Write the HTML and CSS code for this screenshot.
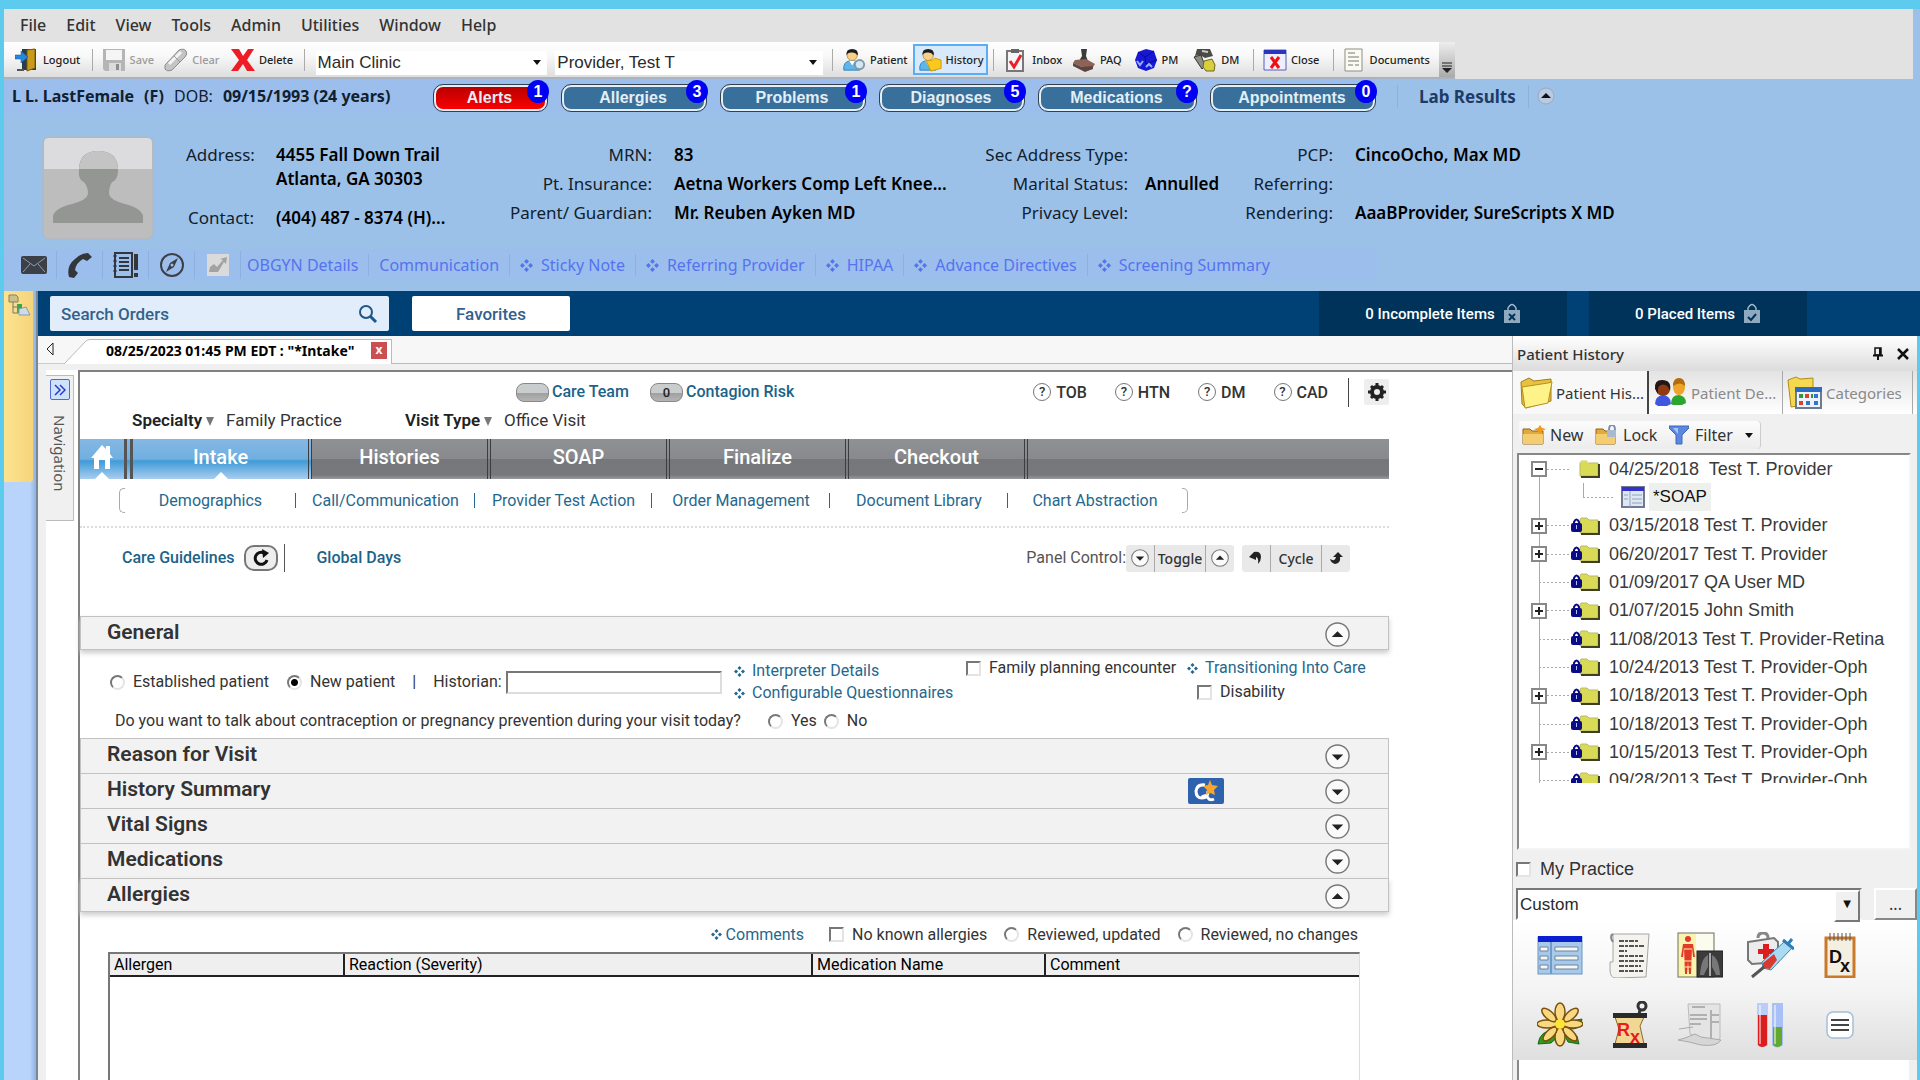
FILE: index.html
```html
<!DOCTYPE html>
<html lang="en">
<head>
    <meta charset="UTF-8">
    <title>Main Clinic - Intake</title>
    <link rel="stylesheet" href="styles.css">
</head>
<body>

<!-- shared icons -->
<svg class="sprite">
    <symbol id="i-folder" viewBox="0 0 24 20">
        <path d="M3 4 L4 2 H10 L12 4 H21 V17 H3Z" fill="#d9da55" stroke="#b9b96a"/>
        <path d="M3 4 L4 2 H10 L12 4" fill="none" stroke="#e9e9b0"/>
        <path d="M22 5 V18 H4" fill="none" stroke="#3f3f22" stroke-width="2"/>
    </symbol>
    <symbol id="i-locked" viewBox="0 0 30 20">
        <path d="M9 4 L10 2 H16 L18 4 H27 V17 H9Z" fill="#d9da55" stroke="#b9b96a"/>
        <path d="M28 5 V18 H10" fill="none" stroke="#3f3f22" stroke-width="2"/>
        <path d="M3 8 V6 Q5.500 1 8 6 V8" fill="none" stroke="#0b0b86" stroke-width="2"/>
        <rect x="0" y="7" width="11" height="9" rx="2" fill="#0b0b86"/>
        <path d="M5.500 9 V13" stroke="#b8c0ff" stroke-width="1"/>
    </symbol>
    <symbol id="i-up" viewBox="0 0 26 26">
        <circle cx="13" cy="13" r="12" fill="#fafafa" stroke="#777" stroke-width="1.500"/>
        <path d="M7 15.500 L13 9.500 L19 15.500Z" fill="#222"/>
    </symbol>
    <symbol id="i-down" viewBox="0 0 26 26">
        <circle cx="13" cy="13" r="12" fill="#fafafa" stroke="#777" stroke-width="1.500"/>
        <path d="M7 11 L13 17 L19 11Z" fill="#222"/>
    </symbol>
    <symbol id="i-diamond" viewBox="0 0 14 14">
        <path d="M7 0 L9.600 2.600 L7 5.200 L4.400 2.600Z M7 8.800 L9.600 11.400 L7 14 L4.400 11.400Z M2.600 4.400 L5.200 7 L2.600 9.600 L0 7Z M11.400 4.400 L14 7 L11.400 9.600 L8.800 7Z" fill="currentColor"/>
    </symbol>
    <symbol id="i-person" viewBox="0 0 26 26">
        <path d="M2 24 Q1 15 8 14 L14 14 Q19 15 19 24Z" fill="#5fb4ea" stroke="#2d83bd"/>
        <path d="M8 14 L11 19 L14 14Z" fill="#fff"/>
        <circle cx="11" cy="8" r="5.500" fill="#f7cf8b" stroke="#c1903f"/>
        <path d="M5 8 Q4 1 11 1 Q18 1 17 8 Q14 4 10 5 Q6 5 5 8Z" fill="#1c1c1c"/>
    </symbol>
    <symbol id="i-bag" viewBox="0 0 18 22">
        <path d="M5 8 V5 Q9 -2 13 5 V8" fill="none" stroke="#9fb6c8" stroke-width="1.500"/>
        <path d="M1 7 H17 V20 H1Z" fill="#8fa9be"/>
    </symbol>
</svg>

<header class="top">
    <nav class="menubar">
        <a href="#">File</a><a href="#">Edit</a><a href="#">View</a><a href="#">Tools</a><a href="#">Admin</a><a href="#">Utilities</a><a href="#">Window</a><a href="#">Help</a>
    </nav>

    <div class="toolbar-row">
        <div class="toolbar">
            <button class="tool logout">
                <svg width="24" height="24" viewBox="0 0 24 24"><path d="M7 1 H21 V22 H7Z" fill="#2b3c4c"/><path d="M12 2 L20 1 V20 L12 23Z" fill="#c99a1c" stroke="#7a5a08"/><path d="M0 7 H6 V3 L13 9 L6 15 V11 H0Z" fill="#2389e0" stroke="#0c549c" stroke-width="0.500"/><path d="M2 22 H9" stroke="#555" stroke-width="2"/></svg>
                Logout
            </button>
            <span class="sep"></span>
            <button class="tool off save">
                <svg width="24" height="24" viewBox="0 0 24 24"><path d="M1 1 H23 V23 H3 L1 21Z" fill="#b5b5b5"/><path d="M4 2 H20 V12 H4Z" fill="#f5f5f5"/><path d="M7 15 H19 V23 H7Z" fill="#dcdcdc"/><path d="M14 16 H17 V22 H14Z" fill="#8d8d8d"/></svg>
                Save
            </button>
            <button class="tool off clear">
                <svg width="24" height="24" viewBox="0 0 24 24"><path d="M1 17 L15 2 Q20 0 22 3 Q24 6 21 9 L8 22 Q3 24 1 21Z" fill="#c4c4c4" stroke="#8c8c8c"/><path d="M5 16 L17 4" stroke="#f4f4f4" stroke-width="3"/><path d="M10 8 L16 14" stroke="#999"/></svg>
                Clear
            </button>
            <button class="tool delete">
                <svg width="24" height="24" viewBox="0 0 24 24"><path d="M0 1 H8 L12 8 L17 1 H23 L16 12 L24 23 H16 L12 16 L7 23 H0 L8 12Z" fill="#ee1c25"/></svg>
                Delete
            </button>
            <span class="sep"></span>
            <span class="combo clinic"><select aria-label="Clinic"><option>Main Clinic</option></select></span>
            <span class="combo provider"><select aria-label="Provider"><option>Provider, Test T</option></select></span>
            <span class="sep"></span>
            <button class="tool find">
                <svg width="24" height="24" viewBox="0 0 26 26"><use href="#i-person"/><circle cx="19" cy="18" r="5" fill="#cfe8f5" stroke="#8298a5" stroke-width="2"/></svg>
                Patient
            </button>
            <button class="tool history">
                <svg width="24" height="24" viewBox="0 0 26 26"><use href="#i-person"/><path d="M9 14 L16 13 L18 11 L25 13 V22 L14 25Z" fill="#fbc91c" stroke="#cf9606"/></svg>
                History
            </button>
            <span class="sep"></span>
            <button class="tool inbox">
                <svg width="18" height="24" viewBox="0 0 18 24"><path d="M1 3 H17 V23 H1Z" fill="#f5f5f5" stroke="#777" stroke-width="2"/><path d="M5 1 H13 V5 H5Z" fill="#666"/><path d="M4 13 L8 19 L15 7" fill="none" stroke="#e8202a" stroke-width="3"/></svg>
                Inbox
            </button>
            <button class="tool paq">
                <svg width="24" height="24" viewBox="0 0 24 24"><path d="M9 1 H15 L14 8 L16 13 H7 L10 8Z" fill="#3d3a3a"/><path d="M3 12 L14 11 L23 16 L21 19 L10 19 L1 15Z" fill="#8d6257"/><path d="M1 15 L10 19 L21 18 V21 L13 24 L1 18Z" fill="#5e443f"/></svg>
                PAQ
            </button>
            <button class="tool pm">
                <svg width="24" height="24" viewBox="0 0 24 24"><path d="M12 1 L20 3 L23 12 L20 20 L12 23 L4 20 L1 12 L4 4Z" fill="#1717d6"/><path d="M4 4 L11 9 L20 3 M11 9 L12 16 L23 12" fill="none" stroke="#0a0a8c"/><path d="M3 13 L6 17 L9 13 M12 19 L15 16 L18 19" fill="none" stroke="#8fb0ff" stroke-width="2"/></svg>
                PM
            </button>
            <button class="tool dm">
                <svg width="24" height="24" viewBox="0 0 24 24"><path d="M4 1 H17 L20 8 L12 10 L7 7 L2 8Z" fill="#4a4a46"/><path d="M1 9 L8 7 L12 18 L9 21Z" fill="#8d8d86" stroke="#333"/><path d="M11 13 L19 11 L22 17 L21 23 H13 L10 19Z" fill="#d9cf3c" stroke="#6b6620"/><path d="M9 3 L15 4" stroke="#ccc" stroke-width="2"/></svg>
                DM
            </button>
            <span class="sep"></span>
            <button class="tool close">
                <svg width="24" height="24" viewBox="0 0 24 24"><path d="M1 2 H23 V22 H1Z" fill="#eef" stroke="#5060b8"/><path d="M1 2 H23 V6 H1Z" fill="#2a35bd"/><path d="M8 9 L16 20 M16 9 L8 20" stroke="#ee1111" stroke-width="3"/></svg>
                Close
            </button>
            <span class="sep"></span>
            <button class="tool documents">
                <svg width="20" height="24" viewBox="0 0 20 24"><path d="M1 1 H18 V23 H1Z" fill="#fbfbf2" stroke="#8d8d86"/><path d="M4 5 H11 M4 9 H15 M4 13 H15 M4 17 H9 M11 17 H15" stroke="#777"/></svg>
                Documents
            </button>
            <button class="overflow" aria-label="More tools"><svg width="10" height="12" viewBox="0 0 10 12"><path d="M0 1 H10 M0 4 H10" stroke="#222"/><path d="M0 6 H10 L5 11Z" fill="#222"/></svg></button>
        </div>
    </div>

    <div class="patient-bar">
        <p class="who"><b>L L. LastFemale</b><b>(F)</b><span>DOB:</span><b>09/15/1993 (24 years)</b></p>
        <div class="pills">
            <button class="pill alert">Alerts<span class="badge">1</span></button>
            <button class="pill">Allergies<span class="badge">3</span></button>
            <button class="pill">Problems<span class="badge">1</span></button>
            <button class="pill">Diagnoses<span class="badge">5</span></button>
            <button class="pill">Medications<span class="badge">?</span></button>
            <button class="pill">Appointments<span class="badge">0</span></button>
        </div>
        <div class="lab">
            <a href="#">Lab Results</a>
            <button aria-label="Collapse"><svg width="18" height="18" viewBox="0 0 18 18"><circle cx="9" cy="9" r="8" fill="#b8cbe2" stroke="#9aa9bb"/><path d="M4 11 L9 6 L14 11Z" fill="#111"/></svg></button>
        </div>
    </div>

    <div class="patient">
        <svg class="avatar" width="112" height="104" viewBox="0 0 112 104">
            <rect x="1" y="1" width="110" height="102" rx="6" fill="#bdbdbd" stroke="#b0b7bf"/>
            <path d="M2 33 V7 Q2 2 7 2 H105 Q110 2 110 7 V33Z" fill="#dcdcde"/>
            <path d="M11 87 V80 Q13 72 30 68 Q45 64 46 58 Q46 51 42 46 Q36 44 37 34 Q37 15 56 15 Q76 15 76 34 Q76 44 70 46 Q67 51 67 58 Q68 64 83 68 Q99 72 101 80 V87Z" fill="#949694"/>
            <path d="M37 33 Q38 15 56 15 Q75 15 76 33Z" fill="#c3c4c3"/>
        </svg>
        <dl class="facts address">
            <dt>Address:</dt><dd>4455 Fall Down Trail<br>Atlanta, GA 30303</dd>
            <dt>Contact:</dt><dd>(404) 487 - 8374 (H)...</dd>
        </dl>
        <dl class="facts insurance">
            <dt>MRN:</dt><dd>83</dd>
            <dt>Pt. Insurance:</dt><dd>Aetna Workers Comp Left Knee...</dd>
            <dt>Parent/ Guardian:</dt><dd>Mr. Reuben Ayken MD</dd>
        </dl>
        <dl class="facts status">
            <dt>Sec Address Type:</dt><dd></dd>
            <dt>Marital Status:</dt><dd>Annulled</dd>
            <dt>Privacy Level:</dt><dd></dd>
        </dl>
        <dl class="facts doctors">
            <dt>PCP:</dt><dd>CincoOcho, Max MD</dd>
            <dt>Referring:</dt><dd></dd>
            <dt>Rendering:</dt><dd>AaaBProvider, SureScripts X MD</dd>
        </dl>
    </div>

    <div class="quick">
        <button aria-label="Mail"><svg width="26" height="18" viewBox="0 0 26 18"><rect width="26" height="18" rx="2" fill="#3c3f45"/><path d="M2 2 L13 10 L24 2 M2 16 L9 8 M24 16 L17 8" fill="none" stroke="#8d9db3"/></svg></button>
        <button aria-label="Phone"><svg width="26" height="26" viewBox="0 0 26 26"><path d="M2 25 Q-1 14 8 7 Q14 1 21 1 L25 5 L20 9 L16 7 Q9 11 8 18 L11 21 L7 26Z" fill="#33363b"/></svg></button>
        <button aria-label="Notes"><svg width="28" height="26" viewBox="0 0 28 26"><rect x="3" y="1" width="17" height="24" fill="none" stroke="#33363b" stroke-width="2"/><path d="M7 6 H17 M7 10 H17 M7 14 H17 M7 18 H17" stroke="#33363b" stroke-width="2"/><path d="M1 4 H5 M1 9 H5 M1 14 H5 M1 19 H5" stroke="#33363b"/><path d="M24 2 V18 M24 21 V25" stroke="#33363b" stroke-width="4"/></svg></button>
        <button aria-label="Compass"><svg width="26" height="26" viewBox="0 0 26 26"><circle cx="13" cy="13" r="11" fill="none" stroke="#3c3f45" stroke-width="2"/><path d="M19 6 L15 15 L7 20 L11 11Z" fill="#3c3f45"/><circle cx="13" cy="13" r="1.500" fill="#9cbeec"/></svg></button>
        <button aria-label="Chart"><svg width="22" height="22" viewBox="0 0 22 22"><rect width="22" height="22" fill="#dadada"/><path d="M2 18 L3 13 L7 10 L10 13 L16 6 L13 5 L20 3 L19 10 L17 8 L11 18Z" fill="#a2a2a2"/></svg></button>
        <a href="#">OBGYN Details</a>
        <a href="#">Communication</a>
        <a href="#"><svg><use href="#i-diamond"/></svg>Sticky Note</a>
        <a href="#"><svg><use href="#i-diamond"/></svg>Referring Provider</a>
        <a href="#"><svg><use href="#i-diamond"/></svg>HIPAA</a>
        <a href="#"><svg><use href="#i-diamond"/></svg>Advance Directives</a>
        <a href="#"><svg><use href="#i-diamond"/></svg>Screening Summary</a>
    </div>
</header>

<div class="below">
    <aside class="rail">
        <button class="rail-tab" aria-label="Folders"><svg width="24" height="24" viewBox="0 0 24 24"><path d="M2 1 H9 L11 3 V8 H2Z" fill="#c9c28f" stroke="#87815a"/><path d="M6 8 V19 H11 M6 13 H11" fill="none" stroke="#777"/><path d="M10 10 H15 V19 H10Z" fill="#36a852"/><path d="M12 15 L19 13 L23 21 H12Z" fill="#cfdbe6" stroke="#8a9bab"/></svg></button>
    </aside>

    <div class="work">
        <div class="orders">
            <label class="search">
                <input type="text" placeholder="Search Orders" aria-label="Search Orders">
                <svg width="20" height="20" viewBox="0 0 20 20"><circle cx="8" cy="8" r="6" fill="none" stroke="#1d568c" stroke-width="2"/><path d="M12 12 L18 18" stroke="#1d568c" stroke-width="3"/></svg>
            </label>
            <button class="favorites">Favorites</button>
            <button class="items incomplete">0 Incomplete Items<svg width="18" height="22" viewBox="0 0 18 22"><use href="#i-bag"/><path d="M6 11 L12 17 M12 11 L6 17" stroke="#00335a" stroke-width="2"/></svg></button>
            <button class="items">0 Placed Items<svg width="18" height="22" viewBox="0 0 18 22"><use href="#i-bag"/><path d="M5 14 L8 17 L13 11" fill="none" stroke="#00335a" stroke-width="2"/></svg></button>
        </div>

        <div class="columns">
            <main>
                <div class="doc-tabs">
                    <button class="scroll" aria-label="Scroll tabs"><svg width="8" height="14" viewBox="0 0 8 14"><path d="M7 1 L1 7 L7 13Z" fill="none" stroke="#222"/></svg></button>
                    <svg class="slant" width="26" height="25" viewBox="0 0 26 25"><path d="M0 25 L21 3 Q23 1 26 1 V25Z" fill="#fff"/><path d="M0 25 L21 3 Q23 0.500 26 0.500" fill="none" stroke="#bbb"/></svg>
                    <div class="doc-tab">08/25/2023 01:45 PM EDT : "*Intake"<button aria-label="Close tab">x</button></div>
                    <div class="doc-rest"></div>
                </div>

                <div class="doc">
                    <div class="nav-side">
                        <div class="nav-box">
                            <button aria-label="Expand navigation"><svg width="12" height="12" viewBox="0 0 12 12"><path d="M1 1 L6 6 L1 11 M6 1 L11 6 L6 11" fill="none" stroke="#2b3bd0" stroke-width="1.500"/></svg></button>
                            <span>Navigation</span>
                        </div>
                    </div>

                    <div class="page">
                        <div class="page-head">
                            <a class="care" href="#"><i class="lozenge"></i>Care Team</a>
                            <a class="risk" href="#"><i class="lozenge">0</i>Contagion Risk</a>
                            <div class="helps">
                                <a href="#"><i>?</i>TOB</a>
                                <a href="#"><i>?</i>HTN</a>
                                <a href="#"><i>?</i>DM</a>
                                <a href="#"><i>?</i>CAD</a>
                            </div>
                            <button class="gear" aria-label="Settings"><svg width="18" height="18" viewBox="0 0 18 18"><circle cx="9" cy="9" r="5" fill="none" stroke="#222" stroke-width="4"/><path d="M9 0 V4 M9 14 V18 M0 9 H4 M14 9 H18 M3 3 L5 5 M13 13 L15 15 M3 15 L5 13 M13 5 L15 3" stroke="#222" stroke-width="3"/></svg></button>
                        </div>
                        <div class="visit">
                            <p class="specialty"><b>Specialty</b><i></i>Family Practice</p>
                            <p><b>Visit Type</b><i></i>Office Visit</p>
                        </div>

                        <nav class="steps">
                            <a class="home on" href="#" aria-label="Home"><svg width="22" height="24" viewBox="0 0 22 24"><path d="M11 0 L15 4 V1 H19 V9 L22 13 H19 V24 H14 V15 H8 V24 H3 V13 H0Z" fill="#fff"/></svg></a>
                            <a class="on" href="#">Intake</a>
                            <a href="#">Histories</a>
                            <a href="#">SOAP</a>
                            <a href="#">Finalize</a>
                            <a href="#">Checkout</a>
                        </nav>

                        <nav class="subnav">
                            <a href="#">Demographics</a>
                            <a href="#">Call/Communication</a>
                            <a href="#">Provider Test Action</a>
                            <a href="#">Order Management</a>
                            <a href="#">Document Library</a>
                            <a href="#">Chart Abstraction</a>
                        </nav>

                        <div class="guide">
                            <a href="#">Care Guidelines</a>
                            <button class="refresh" aria-label="Refresh"><svg width="18" height="18" viewBox="0 0 18 18"><path d="M12 4 A6 6 0 1 0 15 11" fill="none" stroke="#111" stroke-width="3"/><path d="M10 0 L17 4 L11 9Z" fill="#111"/></svg></button>
                            <a class="global" href="#">Global Days</a>
                            <span class="panel-label">Panel Control:</span>
                            <div class="group toggle">
                                <button aria-label="Open all"><svg width="18" height="18"><use href="#i-down"/></svg></button>
                                <button class="word">Toggle</button>
                                <button aria-label="Close all"><svg width="18" height="18"><use href="#i-up"/></svg></button>
                            </div>
                            <div class="group">
                                <button aria-label="Previous"><svg width="14" height="14" viewBox="0 0 14 14"><path d="M0 6 L5 1 Q12 0 12 6 Q12 10 9 13 Q10 7 7 6 V9Z" fill="#222"/></svg></button>
                                <button class="word">Cycle</button>
                                <button aria-label="Next"><svg width="14" height="14" viewBox="0 0 14 14"><path d="M9 1 L14 6 H11 Q12 12 6 13 Q2 12 1 8 Q6 11 7 6 H4Z" fill="#222"/></svg></button>
                            </div>
                        </div>

                        <section class="open">
                            <h2>General<button aria-label="Collapse General"><svg><use href="#i-up"/></svg></button></h2>
                            <div class="general">
                                <div class="kind">
                                    <label><input type="radio" name="kind">Established patient</label>
                                    <label><input type="radio" name="kind" checked>New patient</label>
                                    <span>|</span>
                                    <label class="historian">Historian:<input type="text"></label>
                                </div>
                                <div class="links">
                                    <a href="#"><svg><use href="#i-diamond"/></svg>Interpreter Details</a>
                                    <a href="#"><svg><use href="#i-diamond"/></svg>Configurable Questionnaires</a>
                                </div>
                                <label class="family"><input type="checkbox">Family planning encounter</label>
                                <div class="care-links">
                                    <a href="#"><svg><use href="#i-diamond"/></svg>Transitioning Into Care</a>
                                    <label><input type="checkbox">Disability</label>
                                </div>
                            </div>
                            <div class="question">
                                <p>Do you want to talk about contraception or pregnancy prevention during your visit today?</p>
                                <label><input type="radio" name="talk">Yes</label>
                                <label><input type="radio" name="talk">No</label>
                            </div>
                        </section>
                        <section><h2>Reason for Visit<button aria-label="Expand Reason for Visit"><svg><use href="#i-down"/></svg></button></h2></section>
                        <section><h2>History Summary
                            <svg class="q-badge" width="36" height="26" viewBox="0 0 36 26"><rect width="36" height="26" rx="2" fill="#2f62ac"/><path d="M17 7 Q9 6 8 13 Q8 20 14 20 Q20 20 20 13 M14 19 Q18 16 20 20 Q22 23 26 21" fill="none" stroke="#fff" stroke-width="3"/><path d="M22 2 L24 7 L30 8 L26 12 L27 17 L22 15 L18 17 L19 12 L15 8 L20 7Z" fill="#f6a530"/></svg>
                            <button aria-label="Expand History Summary"><svg><use href="#i-down"/></svg></button></h2></section>
                        <section><h2>Vital Signs<button aria-label="Expand Vital Signs"><svg><use href="#i-down"/></svg></button></h2></section>
                        <section><h2>Medications<button aria-label="Expand Medications"><svg><use href="#i-down"/></svg></button></h2></section>
                        <section class="open">
                            <h2>Allergies<button aria-label="Collapse Allergies"><svg><use href="#i-up"/></svg></button></h2>
                            <div class="review">
                                <a href="#"><svg><use href="#i-diamond"/></svg>Comments</a>
                                <label><input type="checkbox">No known allergies</label>
                                <label><input type="radio" name="review">Reviewed, updated</label>
                                <label><input type="radio" name="review">Reviewed, no changes</label>
                            </div>
                        </section>
                        <div class="grid-box">
                            <table>
                                <thead><tr><th class="c-allergen">Allergen</th><th class="c-reaction">Reaction (Severity)</th><th class="c-med">Medication Name</th><th>Comment</th></tr></thead>
                            </table>
                        </div>
                    </div>
                </div>
            </main>

            <aside class="history-panel">
                <div class="hp-title">Patient History
                    <button aria-label="Pin"><svg width="12" height="14" viewBox="0 0 12 14"><path d="M3 1 H9 V8 H3Z" fill="none" stroke="#111" stroke-width="1.500"/><path d="M8 1 V8" stroke="#111" stroke-width="2"/><path d="M1 8.500 H11 M6 9 V13" stroke="#111" stroke-width="2"/></svg></button>
                    <button aria-label="Close panel"><svg width="14" height="12" viewBox="0 0 14 12"><path d="M2 1 L12 11 M12 1 L2 11" stroke="#111" stroke-width="2.500"/></svg></button>
                </div>
                <div class="hp-tabs">
                    <button class="on"><svg width="34" height="32" viewBox="0 0 34 32"><path d="M1 5 L9 1 L14 4 L31 2 V24 L6 31 L2 27Z" fill="#e8c13f" stroke="#a07d18"/><path d="M2 10 L28 6 L32 5 L28 26 L5 31Z" fill="#fdf388" stroke="#b59120"/></svg>Patient His...</button>
                    <button><svg width="34" height="32" viewBox="0 0 34 32"><path d="M2 27 Q2 19 10 18 Q18 19 18 27 L14 29 H5Z" fill="#3f57e0"/><path d="M18 27 Q18 18 26 18 Q33 19 33 26 L29 28 H20Z" fill="#2ba52f"/><circle cx="10" cy="12" r="7" fill="#8f3a13"/><path d="M2 12 Q1 3 9 3 Q19 3 17 14 Q14 6 8 8 Q4 9 5 17Z" fill="#221714"/><ellipse cx="26" cy="10" rx="6" ry="8" fill="#eda428"/><path d="M20 9 Q20 1 26 1 Q32 1 32 9 Q27 4 20 9Z" fill="#b06d10"/></svg>Patient De...</button>
                    <button><svg width="36" height="34" viewBox="0 0 36 34"><path d="M1 4 L9 1 L13 3 L26 2 V28 L4 31Z" fill="#f3d850" stroke="#b18c1c"/><rect x="9" y="12" width="25" height="20" fill="#eef3fb" stroke="#6d7b90" stroke-width="2"/><path d="M8 11 H35 V16 H8Z" fill="#2d6cc0"/><path d="M12 20 H16 M24 20 H26" stroke="#2c9a3c" stroke-width="4"/><path d="M18 20 H22 M12 27 H16" stroke="#d7442a" stroke-width="4"/><path d="M27 20 H31 M19 27 H23 M27 27 H31" stroke="#2f75d6" stroke-width="4"/></svg>Categories</button>
                </div>
                <div class="hp-tools">
                    <div class="hp-tools-in">
                        <button class="t-new"><svg width="24" height="20" viewBox="0 0 24 20"><path d="M1 4 H8 L10 6 H21 V19 H1Z" fill="#e0aa3c" stroke="#8f6512"/><path d="M1 9 H21 V19 H1Z" fill="#f3cd70"/><path d="M18 0 L20 3 L24 4 L20 6 L18 9 L16 6 L12 4 L16 3Z" fill="#f39a1a"/></svg>New</button>
                        <button class="t-lock"><svg width="24" height="20" viewBox="0 0 24 20"><path d="M1 4 H8 L10 6 H20 V19 H1Z" fill="#e0aa3c" stroke="#8f6512"/><path d="M1 9 H20 V19 H1Z" fill="#f3cd70"/><path d="M14 5 Q14 0 17 0 Q20 0 20 5" fill="none" stroke="#7f90ad" stroke-width="2"/><rect x="12" y="5" width="9" height="7" fill="#a8b9d4"/></svg>Lock</button>
                        <button class="t-filter"><svg width="20" height="20" viewBox="0 0 20 20"><path d="M0 1 H20 V3 L13 10 V19 H7 V10 L0 3Z" fill="#5b87e0" stroke="#3f68bb"/><path d="M4 3 H9 V9Z" fill="#a9c4f7"/></svg>Filter<i></i></button>
                    </div>
                </div>
                <div class="tree">
                    <div class="tree-clip">
                        <ul>
                            <li class="exp first"><i class="box minus"></i><svg class="fold"><use href="#i-folder"/></svg>04/25/2018&nbsp; Test T. Provider</li>
                            <li class="child"><svg width="24" height="22" viewBox="0 0 24 22"><rect x="1" y="1" width="22" height="20" fill="#dfe7f2" stroke="#707a92" stroke-width="2"/><path d="M1 1 H23 V5 H1Z" fill="#3432c8"/><path d="M9 5 V21 M3 9 H7 M3 13 H7 M11 9 H21 M11 13 H21 M11 17 H21" stroke="#8fa3c4"/></svg><span>*SOAP</span></li>
                            <li class="exp"><i class="box"></i><svg class="lock"><use href="#i-locked"/></svg>03/15/2018 Test T. Provider</li>
                            <li class="exp"><i class="box"></i><svg class="lock"><use href="#i-locked"/></svg>06/20/2017 Test T. Provider</li>
                            <li><svg class="lock"><use href="#i-locked"/></svg>01/09/2017 QA User MD</li>
                            <li class="exp"><i class="box"></i><svg class="lock"><use href="#i-locked"/></svg>01/07/2015 John Smith</li>
                            <li><svg class="lock"><use href="#i-locked"/></svg>11/08/2013 Test T. Provider-Retina</li>
                            <li><svg class="lock"><use href="#i-locked"/></svg>10/24/2013 Test T. Provider-Oph</li>
                            <li class="exp"><i class="box"></i><svg class="lock"><use href="#i-locked"/></svg>10/18/2013 Test T. Provider-Oph</li>
                            <li><svg class="lock"><use href="#i-locked"/></svg>10/18/2013 Test T. Provider-Oph</li>
                            <li class="exp"><i class="box"></i><svg class="lock"><use href="#i-locked"/></svg>10/15/2013 Test T. Provider-Oph</li>
                            <li><svg class="lock"><use href="#i-locked"/></svg>09/28/2013 Test T. Provider-Oph</li>
                        </ul>
                    </div>
                </div>
                <label class="practice"><input type="checkbox">My Practice</label>
                <div class="custom">
                    <span class="combo raised"><select aria-label="Template set"><option>Custom</option></select></span>
                    <button>...</button>
                </div>
                <div class="apps">
                    <button aria-label="Templates"><svg width="46" height="46" viewBox="0 0 46 46"><rect x="1" y="5" width="44" height="37" fill="#a9c9ea" stroke="#6d93bd"/><path d="M1 4 H45 V10 H1Z" fill="#0a1fd0"/><path d="M14 10 V42" stroke="#6f9bcb" stroke-width="2"/><path d="M18 15 H41 V19 H18Z M18 24 H41 V28 H18Z M18 33 H41 V37 H18Z M3 15 H11 V19 H3Z M3 24 H11 V28 H3Z M3 33 H11 V37 H3Z" fill="#f7f7ee" stroke="#6685a6"/></svg></button>
                    <button aria-label="Documents"><svg width="46" height="46" viewBox="0 0 46 46"><path d="M6 2 L42 2 L39 45 L9 46 Q3 46 3 38 V30 L6 30Z" fill="#f4f3ee" stroke="#a6a6a2"/><path d="M6 2 Q2 4 6 10" fill="none" stroke="#888" stroke-width="2"/><path d="M12 9 H32 M12 14 H37 M12 19 H20 M12 24 H36 M12 29 H37 M12 34 H34 M12 39 H36" stroke="#555" stroke-width="2" stroke-dasharray="5 1 3 1"/></svg></button>
                    <button aria-label="Images"><svg width="46" height="46" viewBox="0 0 46 46"><rect x="1" y="1" width="36" height="44" fill="#f8f4b0" stroke="#70705e"/><path d="M19 2 H36 V20 H19Z" fill="#fbfbee"/><circle cx="11" cy="7" r="3" fill="#e23a26"/><path d="M6 12 H16 L18 25 H16 L15 15 L14 42 H12 L11 30 L10 42 H8 L7 15 L6 25 H4Z" fill="#e23a26"/><path d="M7 17 H15 M7 29 H15 M8 35 H14" stroke="#f8f4b0"/><rect x="20" y="19" width="26" height="26" fill="#3b3b3b" stroke="#222"/><path d="M23 43 Q24 26 31 23 V35 Q28 40 27 43Z M43 43 Q42 26 35 23 V35 Q38 40 39 43Z" fill="#777"/><path d="M33 21 V44" stroke="#aaa" stroke-width="2"/></svg></button>
                    <button aria-label="Immunizations"><svg width="48" height="46" viewBox="0 0 48 46"><path d="M12 6 Q12 1 17 1 Q22 1 22 6" fill="none" stroke="#888" stroke-width="3"/><path d="M2 10 L28 6 L32 10 V30 L6 32 L2 28Z" fill="#ececec" stroke="#777" stroke-width="2"/><path d="M17 12 H23 V17 H28 V22 H23 V27 H17 V22 H12 V17 H17Z" fill="#e01d1d"/><path d="M38 10 L46 16 L25 38 L17 36 L16 30Z" fill="#a9dcf3" stroke="#3b87b5"/><path d="M17 31 L28 22 L31 28 L24 37 L17 36Z" fill="#d83931"/><path d="M18 35 L6 45" stroke="#555" stroke-width="3"/><path d="M37 8 L48 17 M42 12 L46 7" stroke="#2f7db9" stroke-width="3"/></svg></button>
                    <button aria-label="Diagnosis"><svg width="32" height="46" viewBox="0 0 32 46"><rect x="2" y="6" width="28" height="39" fill="#f4efe0" stroke="#c9792a" stroke-width="3"/><path d="M6 1 V9 M10 1 V9 M14 1 V9 M18 1 V9 M22 1 V9 M26 1 V9" stroke="#555"/><text x="5" y="31" class="dx">D</text><text x="16" y="40" class="dx">x</text></svg></button>
                    <button aria-label="Allergies"><svg width="46" height="46" viewBox="0 0 46 46"><path d="M1 42 Q3 28 18 28 L24 32 L14 41Z M30 20 L45 17 Q44 28 32 27Z M28 34 L40 34 L42 42 L31 40Z" fill="#2f9a22" stroke="#1b6612"/><g fill="#f8d982" stroke="#7b4f0a" stroke-width="1.500"><ellipse cx="23" cy="10" rx="5" ry="9"/><ellipse cx="23" cy="35" rx="5" ry="9"/><ellipse cx="10" cy="22" rx="10" ry="4"/><ellipse cx="36" cy="22" rx="10" ry="4"/><ellipse cx="12" cy="13" rx="9" ry="4" transform="rotate(42 12 13)"/><ellipse cx="34" cy="13" rx="9" ry="4" transform="rotate(-42 34 13)"/><ellipse cx="13" cy="32" rx="9" ry="4" transform="rotate(-45 13 32)"/><ellipse cx="33" cy="32" rx="9" ry="4" transform="rotate(45 33 32)"/></g><circle cx="23" cy="22" r="5" fill="#ffe432"/></svg></button>
                    <button aria-label="Prescriptions"><svg width="36" height="48" viewBox="0 0 36 48"><circle cx="30" cy="5" r="4" fill="none" stroke="#333" stroke-width="3"/><path d="M28 9 L27 13" stroke="#333" stroke-width="3"/><path d="M3 16 H32 L28 25 L32 43 H3 L7 28Z" fill="#f1d794" stroke="#8b6a2b"/><path d="M1 12 H35 V17 H1Z M1 42 H35 V47 H1Z" fill="#2a2a2a"/><text x="5" y="35" class="rx">R</text><text x="18" y="42" class="rx">x</text></svg></button>
                    <button aria-label="Orders"><svg width="46" height="46" viewBox="0 0 46 46"><path d="M11 2 H43 V36 L38 42 L13 32Z" fill="#e4e4e4" stroke="#bbb"/><path d="M15 5 H28 M13 13 H30 M13 17 H30 M13 22 H24 M34 8 V40 M35 13 H42 M35 20 H42" stroke="#b0b0b0" stroke-width="2"/><path d="M1 38 L8 36 L18 32 L24 35 L44 38 Q40 45 24 43 L12 40Z M2 27 L16 25" fill="#d6d6d6" stroke="#aaa"/></svg></button>
                    <button aria-label="Labs"><svg width="28" height="46" viewBox="0 0 28 46"><path d="M1 1 H12 V43 Q6 48 1 43Z" fill="#b9cdfa"/><path d="M2 13 H11 V43 Q6 47 2 43Z" fill="#db1d1d"/><path d="M16 1 H27 V43 Q21 48 16 43Z" fill="#a9c0f6"/><path d="M17 25 H26 V43 Q21 47 17 43Z" fill="#63a930"/><path d="M4 3 V42 M19 3 V42" stroke="#fff" stroke-opacity="0.500" stroke-width="2"/></svg></button>
                    <button aria-label="List"><svg width="28" height="28" viewBox="0 0 28 28"><rect x="1" y="1" width="26" height="26" rx="6" fill="#fff" stroke="#a5bdd8" stroke-width="1.500"/><path d="M5 9 H23 M5 14 H23 M5 19 H23" stroke="#444" stroke-width="2"/></svg></button>
                </div>
                <div class="hp-rest"></div>
            </aside>
        </div>
    </div>
</div>

</body>
</html>
```
FILE: styles.css
```css
* {
    box-sizing: border-box;
    margin: 0;
    padding: 0;
}

body {
    display: flex;
    flex-direction: column;
    min-height: 100vh;
    border-top: 9px solid #5ccbee;
    border-left: 4px solid #5ccbee;
    font: 16px/22px Roboto, sans-serif;
    color: #333;
    background: #fff;
}

a {
    color: inherit;
    text-decoration: none;
}

button {
    border: 0;
    background: none;
    font: inherit;
    color: inherit;
    cursor: pointer;
}

svg {
    display: block;
    flex: none;
}

i {
    font-style: normal;
}

.sprite {
    position: absolute;
    width: 0;
    height: 0;
}

/* radios and tick boxes */
input[type=radio], input[type=checkbox] {
    appearance: none;
    flex: none;
    width: 15px;
    height: 15px;
    border: 2px solid;
    border-color: #777 #e4e4e4 #e4e4e4 #777;
    background: #fff;
}

input[type=radio] {
    border-radius: 50%;
}

input[type=radio]:checked {
    background: radial-gradient(circle, #000 3px, #fff 4px);
}

/* combo boxes */
.combo {
    position: relative;
    display: block;
}

.combo select {
    appearance: none;
    width: 100%;
    height: 100%;
    border: 0;
    padding-left: 2px;
    background: #fff;
    font: inherit;
    color: #2a2a2a;
}

.combo::after {
    content: "";
    position: absolute;
    right: 6px;
    top: 9px;
    border: 4px solid transparent;
    border-top: 5px solid #111;
    border-bottom: 0;
    pointer-events: none;
}

/* header */
.top {
    background: #9cc1e8;
    font-family: "Noto Sans", sans-serif;
    color: #10202f;
}

.menubar {
    display: flex;
    gap: 20px;
    height: 33px;
    padding: 5px 16px;
    margin-right: 7px;
    background: #e2e2e2;
    font-weight: 500;
    color: #333;
}

.toolbar-row {
    margin-right: 7px;
    background: #e2e2e2;
}

.toolbar {
    display: flex;
    align-items: center;
    width: 1451px;
    height: 37px;
    background: linear-gradient(#fff, #f8f8f8 40%, #dedede);
    border-bottom: 2px solid #a9b4c0;
    padding-left: 11px;
}

.sep {
    width: 1px;
    height: 22px;
    background: #aaa;
}

.tool {
    display: flex;
    align-items: center;
    gap: 4px;
    height: 31px;
    font-size: 11px;
    font-weight: 500;
    color: #222;
    white-space: nowrap;
}

.off {
    color: #9a9a9a;
}

.logout { width: 77px; }
.save { width: 72px; padding-left: 9px; }
.clear { width: 67px; }
.delete { width: 73px; }
.find { width: 80px; padding-left: 9px; }
.history { width: 76px; padding-left: 3px; border: 2px solid #5aaef5; background: #d8e9fc; margin-right: 5px; }
.inbox { width: 78px; padding-left: 12px; gap: 8px; }
.paq { width: 62px; }
.pm { width: 60px; }
.dm { width: 60px; }
.close { width: 79px; padding-left: 9px; }
.documents { width: 106px; padding-left: 10px; gap: 6px; }

.clinic {
    width: 233px;
    height: 24px;
    margin: 6px 6px 0 11px;
    font: 17px "Liberation Sans", sans-serif;
}

.provider {
    width: 269px;
    height: 24px;
    margin: 6px 9px 0 2px;
    font: 17px "Liberation Sans", sans-serif;
}

.overflow {
    display: flex;
    align-items: flex-end;
    justify-content: center;
    width: 16px;
    height: 100%;
    margin-left: auto;
    padding-bottom: 3px;
    background: linear-gradient(#eee, #aaa);
}

.patient-bar {
    display: flex;
    align-items: center;
    height: 34px;
    padding-left: 8px;
    background: linear-gradient(#9cbeec, #9cbeec) 0 0 / 1371px 100% no-repeat;
}

.who {
    display: flex;
    gap: 10px;
    width: 422px;
    white-space: nowrap;
}

.pills {
    display: flex;
    gap: 15px;
    margin-top: 4px;
}

.pill {
    position: relative;
    width: 144px;
    height: 26px;
    padding-right: 2px;
    border: 2px solid #e6eef5;
    border-radius: 9px;
    outline: 1px solid #33414e;
    background: #38709b;
    font: bold 16px "Liberation Sans", sans-serif;
    color: #e3eef5;
}

.pill:nth-child(1) { width: 113px; }
.pill:nth-child(5) { width: 157px; }
.pill:nth-child(6) { width: 164px; }

.alert {
    background: linear-gradient(#b80000, #fb0000);
}

.badge {
    position: absolute;
    top: -7px;
    right: -4px;
    width: 22px;
    height: 23px;
    border-radius: 50%;
    background: #0000f5;
    line-height: 23px;
    text-align: center;
    color: #fff;
}

.lab {
    display: flex;
    align-items: center;
    margin-left: 22px;
    font: bold 17px "Noto Sans", sans-serif;
    color: #1c3c66;
}

.lab a {
    width: 132px;
    padding: 0 10px 0 21px;
    border: solid #8fb0da;
    border-width: 0 1px;
    white-space: nowrap;
}

.lab button {
    margin-left: 8px;
}

.patient {
    display: flex;
    align-items: flex-start;
    height: 136px;
    padding: 23px 0 0 38px;
}

.facts {
    display: grid;
    grid-auto-rows: 29px;
    column-gap: 22px;
    padding-top: 7px;
    font-size: 17px;
    line-height: 24px;
    white-space: nowrap;
}

.facts dt {
    text-align: right;
}

.facts dd {
    font-weight: 600;
    color: #000;
}

.address {
    grid-template-columns: 68px 1fr;
    grid-template-rows: 63px 24px;
    width: 306px;
    margin-left: 32px;
}

.insurance {
    grid-template-columns: 160px 1fr;
    width: 489px;
}

.status {
    grid-template-columns: 147px 1fr;
    column-gap: 17px;
    width: 242px;
}

.doctors {
    grid-template-columns: 110px 1fr;
}

.quick {
    display: flex;
    align-items: center;
    height: 42px;
    padding: 0 0 10px 7px;
    background: linear-gradient(#9cbeec, #9cbeec) 0 0 / 1373px 32px no-repeat;
    color: #5573f0;
    white-space: nowrap;
}

.quick button {
    display: flex;
    justify-content: center;
    align-items: center;
    width: 46px;
    height: 28px;
    border-right: 1px solid #8cb0e0;
}

.quick a {
    display: flex;
    align-items: center;
    gap: 8px;
    padding: 0 10px;
    border-left: 1px solid #8cb0e0;
}

.quick button + a {
    padding-left: 6px;
    border-left: 0;
}

.quick a svg {
    width: 13px;
    height: 13px;
}

/* area below the header */
.below {
    display: flex;
    flex: 1;
}

.rail {
    width: 34px;
    border-right: 2px solid #7b8794;
    background: linear-gradient(90deg, #b8d4fb 80%, #8fb2e0);
}

.rail-tab {
    display: flex;
    justify-content: center;
    width: 29px;
    height: 191px;
    padding-top: 3px;
    border-bottom-right-radius: 3px;
    background: linear-gradient(90deg, #fde38f, #f5d47b);
}

.work {
    display: flex;
    flex-direction: column;
    flex: 1;
    min-width: 0;
}

.orders {
    display: flex;
    height: 45px;
    padding-left: 12px;
    background: #004175;
    font-size: 17px;
    font-weight: 500;
}

.search {
    display: flex;
    align-items: center;
    width: 339px;
    height: 35px;
    margin: 5px 23px 0 0;
    padding: 0 11px;
    border-radius: 2px;
    background: #e1edfa;
}

.search input {
    flex: 1;
    min-width: 0;
    border: 0;
    background: none;
    font: inherit;
}

.search input::placeholder {
    color: #34618c;
}

.favorites {
    width: 158px;
    height: 35px;
    margin-top: 5px;
    border-radius: 2px;
    background: #fff;
    color: #34618c;
}

.items {
    display: flex;
    align-items: center;
    justify-content: center;
    gap: 8px;
    width: 218px;
    margin-right: 113px;
    background: #00335a;
    font-size: 15px;
    color: #fff;
}

.incomplete {
    width: 248px;
    margin: 0 22px 0 auto;
}

.columns {
    display: flex;
    flex: 1;
}

main {
    display: flex;
    flex-direction: column;
    flex: 1;
    min-width: 0;
}

.doc-tabs {
    display: flex;
    align-items: flex-end;
    height: 28px;
    background: #f7f7f7;
}

.scroll {
    display: flex;
    align-items: center;
    width: 26px;
    height: 28px;
    padding-left: 8px;
    padding-bottom: 2px;
    border-bottom: 1px solid #ccc;
}

.doc-tab {
    display: flex;
    align-items: center;
    justify-content: space-between;
    width: 302px;
    height: 25px;
    padding: 0 4px 4px 16px;
    border-top: 1px solid #bbb;
    border-right: 1px solid #bbb;
    background: #fff;
    font: bold 14px "Noto Sans", sans-serif;
    color: #000;
    white-space: nowrap;
}

.doc-tab button {
    width: 16px;
    height: 17px;
    background: #c94f50;
    font-size: 12px;
    line-height: 14px;
    color: #fff;
}

.doc-rest {
    flex: 1;
    border-bottom: 1px solid #bbb;
}

.doc {
    display: flex;
    flex: 1;
    padding-top: 6px;
    background: linear-gradient(#f0f0f0 6px, #fff 6px);
}

.nav-side {
    width: 40px;
    padding-top: 5px;
    border-left: 8px solid #f0f0f0;
}

.nav-box {
    display: flex;
    flex-direction: column;
    align-items: center;
    width: 28px;
    height: 146px;
    padding-top: 3px;
    border: 1px solid #bbb;
    border-left: 0;
    background: #f0f0f0;
}

.nav-box button {
    display: flex;
    align-items: center;
    justify-content: center;
    width: 20px;
    height: 21px;
    border: 1px solid #5568d8;
    border-radius: 2px;
    background: #cfe2fb;
}

.nav-box span {
    margin-top: 15px;
    writing-mode: vertical-rl;
    font: 15px/20px "Noto Sans", sans-serif;
    color: #555;
}

.page {
    display: flex;
    flex-direction: column;
    flex: 1;
    border-top: 2px solid #808080;
    border-left: 2px solid #808080;
}

.page > * {
    max-width: 1309px;
}

.page-head {
    display: flex;
    align-items: center;
    height: 40px;
    padding-left: 436px;
    font-weight: 500;
    white-space: nowrap;
}

.care, .risk {
    display: flex;
    align-items: center;
    gap: 3px;
    color: #1c6389;
}

.care {
    width: 134px;
}

.lozenge {
    width: 33px;
    height: 19px;
    border: 1px solid #888;
    border-radius: 8px;
    background: linear-gradient(#c9cdcd 50%, #9e9e9e 50%, #b5b5b5);
    font-size: 13px;
    line-height: 17px;
    text-align: center;
    color: #222;
}

.helps {
    display: flex;
    gap: 28px;
    margin-left: auto;
    padding-right: 20px;
    border-right: 1px solid #444;
    line-height: 29px;
}

.helps a {
    display: flex;
    align-items: center;
    gap: 5px;
}

.helps i {
    width: 18px;
    height: 18px;
    border: 1px solid #777;
    border-radius: 50%;
    font-size: 13px;
    line-height: 16px;
    text-align: center;
}

.gear {
    display: flex;
    align-items: center;
    justify-content: center;
    width: 25px;
    height: 26px;
    margin-left: 15px;
    border-radius: 2px;
    background: #eee;
}

.visit {
    display: flex;
    height: 27px;
    padding-left: 52px;
    font-size: 17px;
    line-height: 16px;
}

.visit p {
    display: flex;
    align-items: center;
    height: 16px;
}

.visit b {
    font-weight: 600;
    color: #222;
}

.visit i {
    margin: 2px 12px 0 4px;
    border: 4px solid transparent;
    border-top: 9px solid #777;
    border-bottom: 0;
}

.specialty {
    width: 273px;
}

.steps {
    display: flex;
    height: 40px;
    background: linear-gradient(#909194, #88898c 50%, #76777a 50%, #77787b 90%, #9a9b9e);
    font-size: 20px;
    font-weight: 500;
    color: #fff;
}

.steps a {
    position: relative;
    width: 179px;
    border-right: 4px double #3d3d3d;
    line-height: 37px;
    text-align: center;
}

.steps .on {
    background: linear-gradient(#85b7e4, #6fb0e0 50%, #3f9bd8 55%, #a9cdef);
}

.steps .on::after {
    content: "";
    position: absolute;
    left: 50%;
    bottom: 0;
    margin-left: -7px;
    border: 7px solid transparent;
    border-bottom-color: #fff;
    border-top: 0;
}

.steps .home {
    display: flex;
    justify-content: center;
    width: 53px;
    padding-top: 6px;
    border-right: 9px double #555;
}

.subnav {
    display: grid;
    grid-template-columns: 6px 171px 179px 177px 178px 178px 174px 6px;
    height: 25px;
    margin: 9px 0 0 39px;
    line-height: 25px;
    text-align: center;
    color: #24688e;
}

/* rounded brackets at both ends */
.subnav::before, .subnav::after {
    content: "";
    border: 1px solid #aaa;
}

.subnav::before {
    border-right: 0;
    border-radius: 5px 0 0 5px;
}

.subnav::after {
    border-left: 0;
    border-radius: 0 5px 5px 0;
}

.subnav a:not(:last-child) {
    background: linear-gradient(#24688e, #24688e) right center / 1px 15px no-repeat;
}

.guide {
    display: flex;
    align-items: center;
    height: 62px;
    margin-top: 13px;
    padding: 0 39px 0 42px;
    border-top: 2px dotted #ddd;
    white-space: nowrap;
}

.guide > a {
    font-weight: 500;
    color: #1c6389;
}

.refresh {
    display: flex;
    align-items: center;
    justify-content: center;
    width: 34px;
    height: 26px;
    margin: 0 6px 0 10px;
    border: 2px solid #777;
    border-radius: 10px;
    background: #eee;
}

.guide .global {
    padding-left: 31px;
    border-left: 1px solid #555;
    line-height: 28px;
}

.panel-label {
    margin-left: auto;
    color: #555;
}

.group {
    display: flex;
    height: 27px;
    border-radius: 3px;
    background: #e9e9e9;
}

.group button {
    display: flex;
    align-items: center;
    justify-content: center;
    width: 28px;
}

.group .word {
    width: 52px;
    border: solid #aaa;
    border-width: 0 1px;
    font: 500 14px "Noto Sans", sans-serif;
}

.toggle {
    margin-right: 8px;
}

/* collapsible sections */
section:first-of-type {
    margin-top: 28px;
}

section h2 {
    display: flex;
    align-items: center;
    height: 35px;
    padding: 0 38px 4px 26px;
    border: 1px solid #c2c2c2;
    border-bottom: 0;
    background: #f2f2f2;
    font-size: 21px;
    font-weight: 600;
    color: #333;
}

section h2 button {
    margin: 4px 0 0 auto;
}

section h2 button svg {
    width: 25px;
    height: 25px;
}

.q-badge {
    margin: 3px 101px 0 auto;
}

.q-badge + button {
    margin-left: 0;
}

.open h2 {
    height: 34px;
    padding-bottom: 2px;
    border-bottom: 1px solid #c2c2c2;
    box-shadow: 0 3px 5px #ccc;
}

.general {
    display: grid;
    grid-template-columns: 624px 232px 221px 1fr;
    padding: 7px 0 0 30px;
    height: 54px;
    white-space: nowrap;
}

.kind, .kind label, .question, .question label, .review, .review label, .family, .care-links label {
    display: flex;
    align-items: center;
}

.kind label, .question label, .review label, .family, .care-links label {
    gap: 8px;
}

.kind {
    height: 22px;
    gap: 18px;
    margin-top: 14px;
}

.kind > span {
    margin: 0 -1px;
}

.kind .historian {
    gap: 4px;
}

.historian input {
    width: 216px;
    height: 23px;
    border: 2px solid;
    border-color: #777 #ddd #ddd #777;
}

.links, .care-links {
    display: flex;
    flex-direction: column;
    color: #24688e;
}

.links {
    padding-top: 3px;
}

.care-links {
    gap: 2px;
}

.links a, .care-links a, .review a {
    display: flex;
    align-items: center;
    gap: 7px;
    color: #24688e;
}

.links svg, .care-links svg, .review svg {
    width: 11px;
    height: 11px;
}

.family {
    height: 22px;
}

.care-links label {
    padding-left: 10px;
    color: #333;
}

.question {
    height: 34px;
    padding-left: 35px;
    gap: 7px;
    white-space: nowrap;
}

.question p {
    width: 646px;
}

.review {
    justify-content: flex-end;
    height: 40px;
    padding: 5px 31px 0 0;
    gap: 17px;
}

.review a {
    gap: 4px;
    margin-right: 8px;
}

.page > .grid-box {
    flex: 1;
    max-width: 1252px;
    margin-left: 28px;
    border: 2px solid #777;
    border-width: 2px 1px 0 2px;
    border-right-color: #ddd;
}

.grid-box table {
    width: 100%;
    border-collapse: collapse;
    table-layout: fixed;
}

.grid-box th {
    height: 22px;
    padding-left: 4px;
    border: solid #222;
    border-width: 0 2px 2px 0;
    background: #efefef;
    font-weight: 400;
    line-height: 20px;
    text-align: left;
    color: #000;
}

.grid-box th:last-child {
    border-right: 0;
}

.c-allergen { width: 234px; }
.c-reaction { width: 468px; }
.c-med { width: 233px; }

/* patient history panel */
.history-panel {
    display: flex;
    flex-direction: column;
    width: 408px;
    border-left: 1px solid #bbb;
    border-right: 3px solid #5ccbee;
    background: #f0f0f0;
    font-family: "Noto Sans", sans-serif;
}

.hp-title {
    display: flex;
    align-items: center;
    gap: 12px;
    height: 35px;
    padding: 0 7px 0 4px;
    background: linear-gradient(#fff, #dcdcdc);
    font-size: 15px;
    font-weight: 500;
}

.hp-title button:first-of-type {
    margin-left: auto;
}

.hp-tabs {
    display: flex;
    height: 43px;
    background: linear-gradient(#e3e3e3, #fff);
    font-size: 15px;
    white-space: nowrap;
}

.hp-tabs button {
    display: flex;
    align-items: center;
    gap: 4px;
    width: 134px;
    padding-left: 4px;
    color: #8a8a8a;
    border-right: 1px solid #aaa;
}

.hp-tabs button:last-child {
    width: 130px;
    gap: 3px;
}

.hp-tabs .on {
    width: 136px;
    padding-left: 7px;
    border-right: 2px solid #444;
    background: #f8f8f8;
    color: #333;
    gap: 2px;
}

.hp-tools {
    height: 39px;
    padding: 7px 6px 4px;
}

.hp-tools-in {
    display: flex;
    align-items: center;
    width: 242px;
    height: 28px;
    border-radius: 4px;
    border-right: 1px solid #ccc;
    background: linear-gradient(#fcfcfc, #ececec);
}

.hp-tools button {
    display: flex;
    align-items: center;
    gap: 4px;
    padding-left: 3px;
}

.hp-tools .t-new { width: 73px; }
.hp-tools .t-lock { width: 74px; }
.hp-tools .t-filter { gap: 6px; }

.t-filter i {
    margin-left: 6px;
    border: 4px solid transparent;
    border-top: 5px solid #111;
    border-bottom: 0;
}

.tree {
    height: 397px;
    margin: 0 6px 0 4px;
    border: 2px solid #888;
    border-right-color: #f4f4f4;
    border-bottom-color: #f4f4f4;
    background: #fff;
    font: 18px "Liberation Sans", sans-serif;
    color: #3a3a3a;
}

.tree-clip {
    height: 328px;
    overflow: hidden;
}

.tree ul {
    display: flex;
    flex-direction: column;
    height: 340px;
    list-style: none;
    background: linear-gradient(#aaa, #aaa) 20px 16px / 1px 100% no-repeat;
}

.tree li {
    display: flex;
    align-items: center;
    flex: 1;
    gap: 8px;
    padding-left: 52px;
    white-space: nowrap;
    background: repeating-linear-gradient(90deg, #aaa 0 2px, transparent 2px 4px) 20px 50% / 32px 1px no-repeat;
}

.tree .exp {
    gap: 0;
    padding-left: 12px;
}

.box {
    width: 16px;
    height: 16px;
    margin-right: 24px;
    border: 2px solid #888;
    background: linear-gradient(#222, #222) center / 8px 2px no-repeat, linear-gradient(#222, #222) center / 2px 8px no-repeat, #fff;
}

.minus {
    background: linear-gradient(#222, #222) center / 8px 2px no-repeat, #fff;
}

.lock {
    width: 30px;
    height: 20px;
}

.exp .lock {
    margin-right: 8px;
}

.fold {
    width: 24px;
    height: 20px;
    margin: 0 8px 0 6px;
}

.tree .child {
    padding-left: 102px;
    gap: 4px;
    color: #111;
    background: repeating-linear-gradient(90deg, #aaa 0 2px, transparent 2px 4px) 64px 50% / 32px 1px no-repeat, linear-gradient(#aaa, #aaa) 64px 0 / 1px 14px no-repeat;
}

.child span {
    padding: 0 4px;
    font-size: 17px;
    line-height: 28px;
    background: #edf0ed;
}

.practice {
    display: flex;
    align-items: center;
    gap: 9px;
    height: 38px;
    padding-left: 3px;
    font: 18px "Liberation Sans", sans-serif;
}

.custom {
    display: flex;
    justify-content: space-between;
    height: 32px;
    padding-left: 3px;
}

.raised {
    width: 346px;
    border: 2px solid;
    border-color: #777 #eee #fff #777;
    font: 17px "Liberation Sans", sans-serif;
}

.raised::after {
    content: "\25BC";
    right: 0;
    top: 0;
    width: 22px;
    height: 28px;
    border: 2px solid;
    border-color: #fff #777 #777 #fff;
    background: #f0f0f0;
    font: 10px/24px "DejaVu Sans", sans-serif;
    text-align: center;
    color: #111;
}

.custom button {
    width: 43px;
    border: 2px solid;
    border-color: #fff #888 #888 #fff;
}

.apps {
    display: grid;
    grid-template-columns: repeat(5, 70px);
    grid-auto-rows: 70px;
    height: 140px;
    padding-left: 12px;
    background: linear-gradient(#fff, #f4f4f4 50%, #dfdfdf);
}

.apps button {
    display: flex;
    align-items: center;
    justify-content: center;
}

.dx, .rx {
    font: bold 18px "Liberation Sans", sans-serif;
    fill: #111;
}

.rx {
    fill: #e81c1c;
}

.hp-rest {
    flex: 1;
    margin: 0 8px 0 4px;
    border-left: 2px solid #888;
    background: #fff;
}
```
